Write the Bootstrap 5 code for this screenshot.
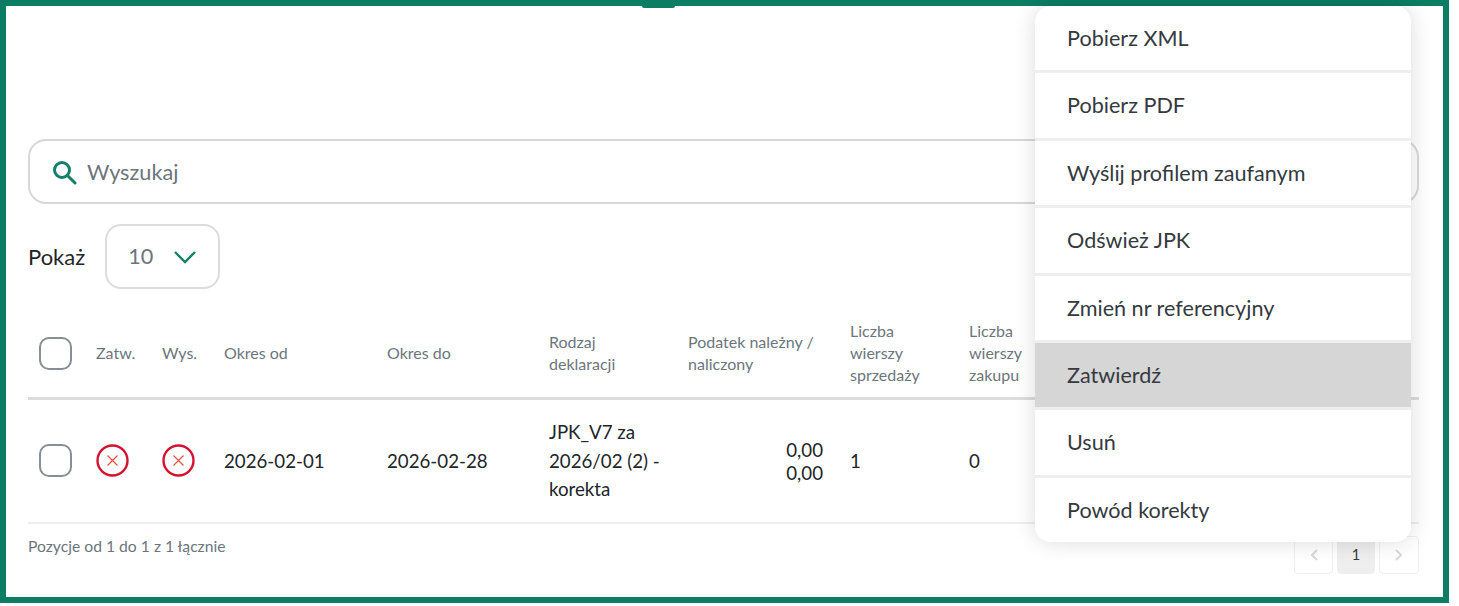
<!DOCTYPE html>
<html lang="pl">
<head>
<meta charset="utf-8">
<title>JPK</title>
<link href="https://cdn.jsdelivr.net/npm/bootstrap@5.3.0/dist/css/bootstrap.min.css" rel="stylesheet">
<style>
html,body{height:100%;background:#fff;overflow:hidden}
body{font-family:Lato,"Liberation Sans",sans-serif;color:#212529;font-size:18.7px}
.frame-box{width:1449px;height:603px;border:6px solid #0a7d63;position:relative;padding:133px 24px 0 22px;background:#fff}
.top-tab{position:absolute;left:636px;top:0;width:33px;height:2px;background:#0a7d63;border-radius:0 0 2px 2px}
.search-box{height:65px;border:2px solid #d8d8d8;border-radius:18px;padding:0 21px;gap:10px;color:#6c757d;font-size:21.7px}
.search-label{padding-top:2px}
.show-row{margin-top:20px;gap:20px;font-size:22px}
.size-select{width:115px;height:65px;border:2px solid #dcdcdc;border-radius:16px;padding:0 21px;color:#6c757d;font-size:21.7px}
.data-table{table-layout:fixed;width:1391px;margin:29px 0 0;font-size:18.7px}
.data-table th{font-weight:400;font-size:16px;line-height:22px;color:#6c757d;padding:0 11px 8px;height:80px;vertical-align:middle;border-bottom:3px solid #dcdcdc}
.data-table td{padding:0 11px;height:125px;vertical-align:middle;line-height:28.5px;border-bottom:2px solid #eee}
.data-table .money{line-height:23px;text-align:right;padding:2px 16px 0 11px}
.w1{width:57px}.w2{width:66px}.w3{width:62px}.w4{width:163px}.w5{width:162px}.w6{width:139px}.w7{width:162px}.w8{width:119px}
.tick{display:block;width:33px;height:33px;border:2px solid #868e96;border-radius:10px;background:#fff}
.foot-info{font-size:15.7px;color:#6c757d;margin-top:11px}
.pager{gap:4px;margin-top:12px}
.pager-cell{width:40px;height:38px;border:1px solid #eee;border-radius:4px;font-size:14.5px;color:#343a40}
.pager-cell.narrow{width:39px}
.pager-cell.current{width:38px;background:#eee;border-color:#eee}
.action-menu{position:absolute;left:1029px;top:0;width:376px;border:0;border-radius:16px;overflow:hidden;box-shadow:0 0 22px rgba(0,0,0,.14);z-index:5}
.action-menu .list-group-item{height:67.4px;display:flex;align-items:center;padding:0 32px;font-size:21.6px;color:#343a40;border:0;border-bottom:3px solid #eee;background:#fff}
.action-menu .list-group-item:last-child{border-bottom:0;height:64px}
.action-menu .list-group-item.chosen{background:#d6d6d6}
</style>
</head>
<body>
<div class="frame-box">
  <div class="top-tab"></div>

  <div class="search-box d-flex align-items-center">
    <svg width="26" height="26" viewBox="0 0 26 26" fill="none" stroke="#12806a" stroke-width="3" aria-hidden="true"><circle cx="11" cy="11" r="7.5"/><path d="M16.5 16.5 24 24" stroke-linecap="round"/></svg>
    <span class="search-label">Wyszukaj</span>
  </div>

  <div class="show-row d-flex align-items-center">
    <span>Pokaż</span>
    <div class="size-select d-flex align-items-center justify-content-between">
      <span>10</span>
      <svg width="24" height="14" viewBox="0 0 24 14" fill="none" stroke="#12806a" stroke-width="2.4" aria-hidden="true"><path d="M2 2l10 10L22 2"/></svg>
    </div>
  </div>

  <table class="table data-table">
    <thead>
      <tr>
        <th class="w1"><span class="tick"></span></th>
        <th class="w2">Zatw.</th>
        <th class="w3">Wys.</th>
        <th class="w4">Okres od</th>
        <th class="w5">Okres do</th>
        <th class="w6">Rodzaj<br>deklaracji</th>
        <th class="w7">Podatek należny / naliczony</th>
        <th class="w8">Liczba wierszy sprzedaży</th>
        <th>Liczba<br>wierszy<br>zakupu</th>
      </tr>
    </thead>
    <tbody>
      <tr>
        <td><span class="tick"></span></td>
        <td><svg class="d-block" width="33" height="33" viewBox="0 0 33 33" fill="none" aria-hidden="true"><circle cx="16.5" cy="16.5" r="15" stroke="#d5122f" stroke-width="2.4"/><path d="M11.5 11.5l10 10M21.5 11.5l-10 10" stroke="#e8503f" stroke-width="1.2"/></svg></td>
        <td><svg class="d-block" width="33" height="33" viewBox="0 0 33 33" fill="none" aria-hidden="true"><circle cx="16.5" cy="16.5" r="15" stroke="#d5122f" stroke-width="2.4"/><path d="M11.5 11.5l10 10M21.5 11.5l-10 10" stroke="#e8503f" stroke-width="1.2"/></svg></td>
        <td>2026-02-01</td>
        <td>2026-02-28</td>
        <td>JPK_V7 za 2026/02 (2) - korekta</td>
        <td class="money">0,00<br>0,00</td>
        <td>1</td>
        <td>0</td>
      </tr>
    </tbody>
  </table>

  <div class="d-flex justify-content-between align-items-start">
    <div class="foot-info">Pozycje od 1 do 1 z 1 łącznie</div>
    <div class="pager d-flex">
      <div class="pager-cell narrow d-flex align-items-center justify-content-center"><svg width="10" height="14" viewBox="0 0 10 14" fill="none" stroke="#d5dade" stroke-width="2"><path d="M8 2 3 7l5 5"/></svg></div>
      <div class="pager-cell current d-flex align-items-center justify-content-center">1</div>
      <div class="pager-cell d-flex align-items-center justify-content-center"><svg width="10" height="14" viewBox="0 0 10 14" fill="none" stroke="#d5dade" stroke-width="2"><path d="M2 2l5 5-5 5"/></svg></div>
    </div>
  </div>

  <div class="action-menu list-group">
    <a class="list-group-item">Pobierz XML</a>
    <a class="list-group-item">Pobierz PDF</a>
    <a class="list-group-item">Wyślij profilem zaufanym</a>
    <a class="list-group-item">Odśwież JPK</a>
    <a class="list-group-item">Zmień nr referencyjny</a>
    <a class="list-group-item chosen">Zatwierdź</a>
    <a class="list-group-item">Usuń</a>
    <a class="list-group-item">Powód korekty</a>
  </div>
</div>
<script src="https://cdn.jsdelivr.net/npm/bootstrap@5.3.0/dist/js/bootstrap.bundle.min.js"></script>
</body>
</html>
